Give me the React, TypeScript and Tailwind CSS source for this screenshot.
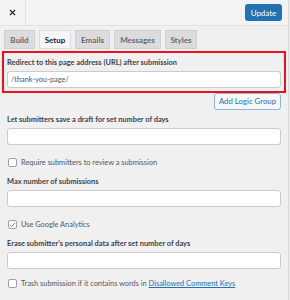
import { Check, X } from 'lucide-react';

const tabs = [
  { name: 'Build', w: 'w-[31px]' },
  { name: 'Setup', w: 'w-[32px]', active: true },
  { name: 'Emails', w: 'w-[35px]' },
  { name: 'Messages', w: 'w-[47px]' },
  { name: 'Styles', w: 'w-[32px]' },
];

function Field({ className }: { className?: string }) {
  return <div className={`h-[17px] bg-white border border-[#c9cbcf] rounded-[3px] ${className ?? ''}`} />;
}

function Label({ children, className }: { children: React.ReactNode; className?: string }) {
  return (
    <div className={`text-[7.4px] font-bold text-[#3c434a] leading-[11px] whitespace-nowrap ${className ?? ''}`}>{children}</div>
  );
}

function CheckRow({ checked, children, className }: { checked?: boolean; children: React.ReactNode; className?: string }) {
  return (
    <div className={`flex items-center h-[11px] pl-[1px] ${className ?? ''}`}>
      <span className="w-[9px] h-[9px] shrink-0 bg-white border border-[#9ea2a8] rounded-[2px] flex items-center justify-center">
        {checked && <Check size={8} strokeWidth={3} className="text-[#2271b1]" />}
      </span>
      <span className="ml-[4px] text-[7.4px] text-[#50575e] whitespace-nowrap">{children}</span>
    </div>
  );
}

export default function App() {
  return (
    <div className="w-[290px] h-[300px] bg-[#f0f0f1] overflow-hidden" style={{ fontFamily: 'Lato, "Open Sans", sans-serif' }}>
      <div className="w-[289px] h-full border-r border-[#d6d6d8] flex flex-col">
        <div className="h-[26px] shrink-0 flex items-center border-b border-[#e2e2e4] bg-[#f3f3f4]">
          <div className="w-[26px] h-full flex items-center justify-center border-r border-[#e2e2e4]">
            <X size={9} strokeWidth={3} className="text-[#1d2327]" />
          </div>
          <div className="flex-1" />
          <button className="mr-[6px] h-[17px] w-[37px] rounded-[3px] bg-[#2271b1] text-white text-[8px] leading-none">Update</button>
        </div>

        <div className="flex items-end gap-[4px] pl-[4px] h-[23px] shrink-0">
          {tabs.map((t) => (
            <div
              key={t.name}
              className={`${t.w} h-[19px] flex items-center justify-center text-[8px] font-bold border ${
                t.active ? 'bg-[#f6f6f7] border-[#dcdcde] text-[#1d2327]' : 'bg-[#dcdcde] border-[#d0d0d2] text-[#646970]'
              }`}
            >
              {t.name}
            </div>
          ))}
        </div>

        <div className="mx-[2px] mt-[2px] border-2 border-[#e8131d] px-[3px] pt-[4px] pb-[3px]">
          <Label>Redirect to this page address (URL) after submission</Label>
          <div className="mt-[3px] h-[17px] bg-white border border-[#c9cbcf] rounded-[3px] flex items-center px-[3px] text-[7.4px] text-[#50575e]">
            /thank-you-page/
          </div>
        </div>

        <div className="px-[7px]">
          <div className="flex justify-end">
            <button className="h-[17px] w-[67px] bg-[#f6f7f7] border border-[#8fb5d9] rounded-[3px] text-[7.8px] text-[#2271b1] leading-none whitespace-nowrap">
              Add Logic Group
            </button>
          </div>

          <Label className="mt-[4px]">Let submitters save a draft for set number of days</Label>
          <Field className="mt-[3px]" />
          <CheckRow className="mt-[12px]">Require submitters to review a submission</CheckRow>

          <Label className="mt-[8px]">Max number of submissions</Label>
          <Field className="mt-[3px]" />
          <CheckRow checked className="mt-[12px]">Use Google Analytics</CheckRow>

          <Label className="mt-[8px]">Erase submitter's personal data after set number of days</Label>
          <Field className="mt-[3px]" />
          <CheckRow className="mt-[9px]">
            Trash submission if it contains words in{' '}
            <a className="text-[#2271b1] underline">Disallowed Comment Keys</a>
          </CheckRow>
        </div>
      </div>
    </div>
  );
}
